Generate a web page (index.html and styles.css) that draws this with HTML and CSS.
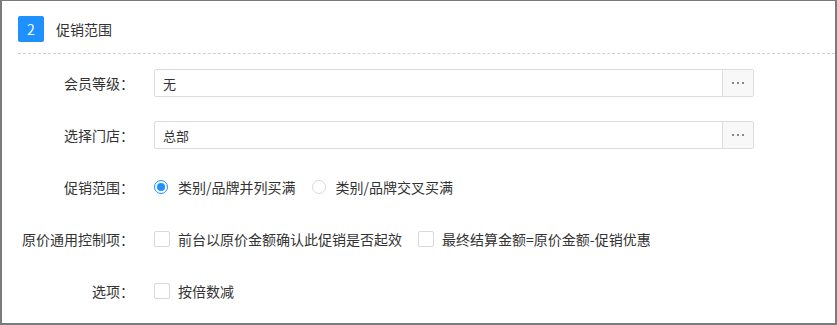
FILE: index.html
```html
<!DOCTYPE html>
<html lang="zh-CN">
<head>
  <meta charset="UTF-8" />
  <title>促销范围</title>
  <meta name="viewport" content="width=device-width, initial-scale=1.0" />
  <link rel="stylesheet" href="styles.css">
</head>
<body>
  <div class="panel">
    <div class="panel-head">
      <span class="step">2</span>
      <span class="step-title">促销范围</span>
    </div>

    <form class="form">
      <div class="row">
        <label class="row-label">会员等级：</label>
        <div class="picker">
          <input type="text" class="picker-input" value="无" readonly />
          <button type="button" class="picker-btn"><i></i><i></i><i></i></button>
        </div>
      </div>

      <div class="row">
        <label class="row-label">选择门店：</label>
        <div class="picker">
          <input type="text" class="picker-input" value="总部" readonly />
          <button type="button" class="picker-btn"><i></i><i></i><i></i></button>
        </div>
      </div>

      <div class="row">
        <label class="row-label">促销范围：</label>
        <div class="options">
          <span class="radio checked"><span class="radio-dot"></span>类别/品牌并列买满</span>
          <span class="radio"><span class="radio-dot"></span>类别/品牌交叉买满</span>
        </div>
      </div>

      <div class="row">
        <label class="row-label">原价通用控制项：</label>
        <div class="options">
          <span class="check"><span class="check-box"></span>前台以原价金额确认此促销是否起效</span>
          <span class="check"><span class="check-box"></span>最终结算金额=原价金额-促销优惠</span>
        </div>
      </div>

      <div class="row">
        <label class="row-label">选项：</label>
        <div class="options">
          <span class="check"><span class="check-box"></span>按倍数减</span>
        </div>
      </div>
    </form>
  </div>
</body>
</html>
```

FILE: styles.css
```css
* {
  box-sizing: border-box;
}

body {
  margin: 0;
  font-family: "Noto Sans CJK SC", "Noto Sans", sans-serif;
  font-size: 14px;
  color: #333;
  background: #fff;
}

.panel {
  width: 837px;
  height: 325px;
  border: 2px solid #7b7b7b;
  border-top-width: 1px;
  padding-left: 16px;
}

.panel-head {
  display: flex;
  align-items: center;
  padding: 15px 0 11px;
  border-bottom: 1px dashed #d0d0d0;
}

.step {
  width: 26px;
  height: 26px;
  border-radius: 2px;
  background-color: #1e90ff;
  color: white;
  display: flex;
  align-items: center;
  justify-content: center;
  font-size: 14px;
}

.step-title {
  margin-left: 12px;
  font-size: 14px;
}

.form {
  padding-top: 15px;
}

.row {
  display: flex;
  align-items: center;
  height: 28px;
  margin-bottom: 24px;
}

.row-label {
  width: 116px;
  margin-right: 20px;
  text-align: right;
  white-space: nowrap;
  font-size: 14px;
}

.picker {
  display: flex;
  width: 600px;
  height: 28px;
  border: 1px solid #dcdcdc;
  border-radius: 2px;
}

.picker-input {
  flex: 1;
  border: none;
  outline: none;
  padding: 0 8px;
  font-family: inherit;
  font-size: 13px;
  color: #333;
  background: transparent;
}

.picker-btn {
  width: 31px;
  border: none;
  border-left: 1px solid #dcdcdc;
  background-color: #f8f8f8;
  display: flex;
  align-items: center;
  justify-content: center;
  gap: 3px;
  padding: 0;
}

.picker-btn i {
  width: 2px;
  height: 2px;
  background-color: #888;
}

.options {
  display: flex;
  align-items: center;
  font-size: 14px;
}

.radio,
.check {
  display: inline-flex;
  align-items: center;
  margin-right: 16px;
  white-space: nowrap;
}

.radio-dot {
  width: 14px;
  height: 14px;
  border: 1px solid #d9d9d9;
  border-radius: 50%;
  margin-right: 10px;
  display: flex;
  align-items: center;
  justify-content: center;
}

.radio.checked .radio-dot {
  border-color: #1e90ff;
}

.radio.checked .radio-dot::after {
  content: "";
  width: 8px;
  height: 8px;
  border-radius: 50%;
  background-color: #1e90ff;
}

.check-box {
  width: 16px;
  height: 16px;
  border: 1px solid #d9d9d9;
  border-radius: 2px;
  margin-right: 8px;
}
```
